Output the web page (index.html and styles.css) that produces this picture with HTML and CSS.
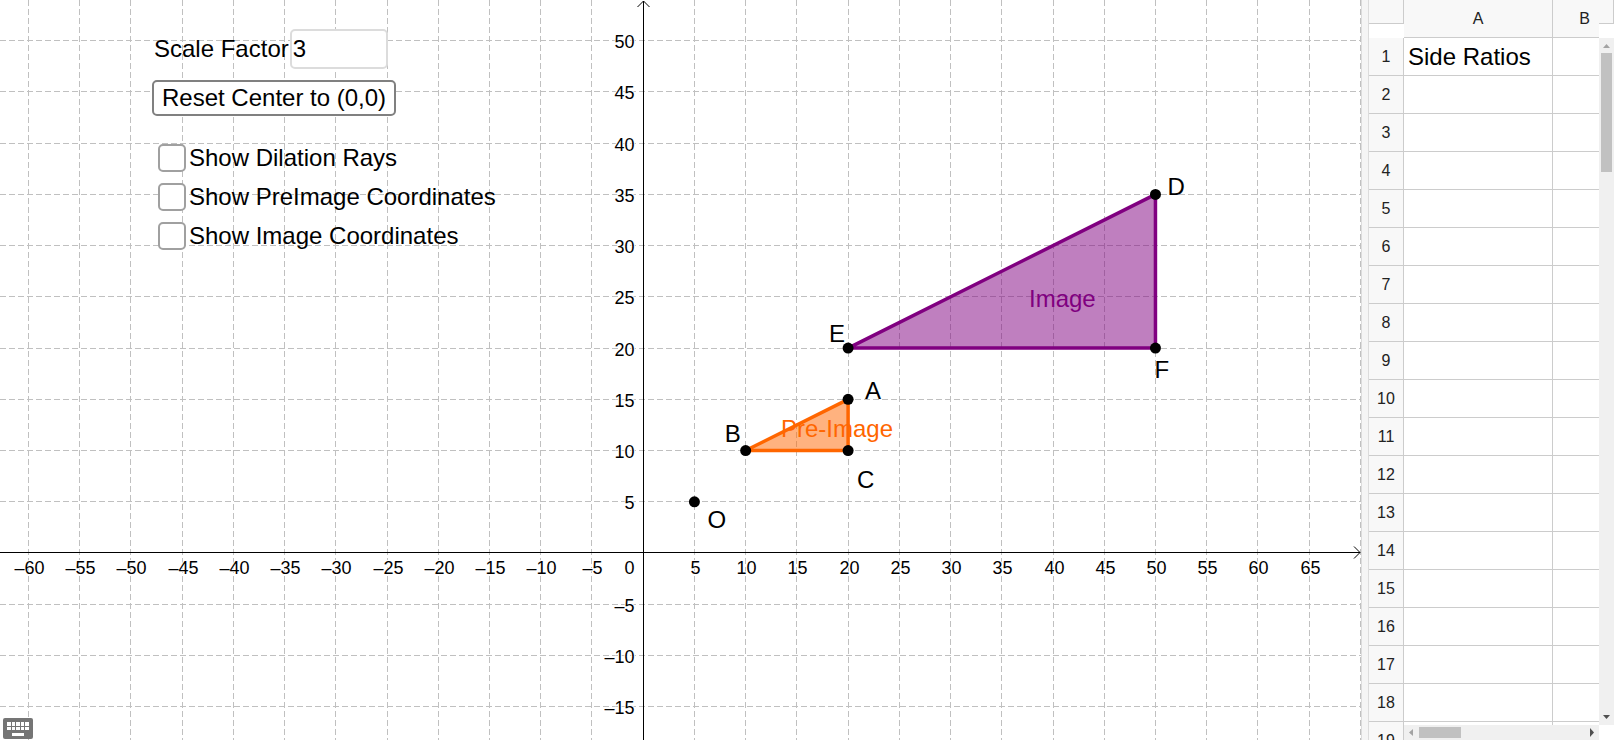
FILE: index.html
```
<!DOCTYPE html>
<html lang="en">
<head>
    <meta charset="UTF-8">
    <meta name="viewport" content="width=device-width, initial-scale=1.0">
    <title>Dilations</title>
    <link rel="stylesheet" href="styles.css">
</head>
<body>
    <main class="app">
        <section class="graphics" id="graphics">
            <svg class="board" id="board"></svg>
            <form class="controls" onsubmit="return false;">
                <div class="scale-row">
                    <label for="scale">Scale Factor</label>
                    <input type="text" id="scale" class="scale-input" value="3">
                </div>
                <button type="button" class="reset-btn">Reset Center to (0,0)</button>
                <div class="checks">
                    <label class="check"><input type="checkbox" id="rays">Show Dilation Rays</label>
                    <label class="check"><input type="checkbox" id="pre-coords">Show PreImage Coordinates</label>
                    <label class="check"><input type="checkbox" id="image-coords">Show Image Coordinates</label>
                </div>
            </form>
            <button type="button" class="keyboard-btn" aria-label="Keyboard">
                <svg width="30" height="21" viewBox="0 0 30 21">
                    <rect width="30" height="21" rx="2" fill="#757575"/>
                    <path fill="#fff" d="M4 4h4v4H4zM9 4h3v4H9zM13 4h4v4h-4zM18 4h3v4h-3zM22 4h4v4h-4zM4 9h4v3H4zM9 9h3v3H9zM13 9h4v3h-4zM18 9h3v3h-3zM22 9h4v3h-4zM9 15h12v3H9z"/>
                </svg>
            </button>
        </section>
        <div class="divider"></div>
        <section class="spreadsheet">
            <div class="sheet-view">
                <table class="sheet">
                    <thead>
                        <tr>
                            <th class="corner"><span></span></th>
                            <th class="col-a">A</th>
                            <th class="col-b">B</th>
                        </tr>
                    </thead>
                    <tbody id="rows"></tbody>
                </table>
                <div class="hbar">
                    <svg width="15" height="15"><path d="M9 4v7L5 7.500z" fill="#a3a3a3"/></svg>
                    <div class="hthumb"></div>
                    <svg class="end" width="15" height="15"><path d="M6 3v9l4-4.500z" fill="#505050"/></svg>
                </div>
            </div>
            <div class="vbar-col">
                <div class="header-end"></div>
                <div class="vbar">
                    <svg width="15" height="15"><path d="M4 10h7L7.500 6z" fill="#a3a3a3"/></svg>
                    <div class="vthumb"></div>
                    <svg class="end" width="15" height="15"><path d="M4 5h7L7.500 9z" fill="#505050"/></svg>
                </div>
            </div>
        </section>
    </main>

    <script>
        const origin = { x: 643.2, y: 553 };
        const unit = 10.245;

        const points = [
            { name: 'A', x: 20, y: 15, dx: 17, dy: 0 },
            { name: 'B', x: 10, y: 10, dx: -21, dy: -9 },
            { name: 'C', x: 20, y: 10, dx: 9, dy: 37 },
            { name: 'D', x: 50, y: 35, dx: 12, dy: 1 },
            { name: 'E', x: 20, y: 20, dx: -19, dy: -6 },
            { name: 'F', x: 50, y: 20, dx: -1, dy: 30 },
            { name: 'O', x: 5, y: 5, dx: 13, dy: 26 }
        ];

        const px = x => origin.x + x * unit;
        const py = y => origin.y - y * unit;
        const snap = v => Math.floor(v) + 0.5;

        function triangle(names, cls) {
            const corners = names.split('').map(n => {
                const p = points.find(q => q.name === n);
                return px(p.x) + ',' + py(p.y);
            });
            return `<polygon class="${cls}" points="${corners.join(' ')}"/>`;
        }

        function drawBoard() {
            const board = document.getElementById('board');
            const w = board.clientWidth;
            const h = board.clientHeight;
            const axisX = 643.5;
            const axisY = 552.5;
            let grid = '';
            let labels = '';

            // vertical lines and x labels
            for (let i = Math.ceil(-origin.x / unit / 5) * 5; px(i) < w; i += 5) {
                const x = snap(px(i));
                if (i !== 0) grid += `<line x1="${x}" y1="0" x2="${x}" y2="${h}"/>`;
                if (i !== 0 && px(i) < w - 20) {
                    labels += `<text class="middle" x="${x + 1}" y="${axisY + 21}">${String(i).replace('-', '–')}</text>`;
                }
            }
            // horizontal lines and y labels
            for (let j = Math.ceil((origin.y - h) / unit / 5) * 5; py(j) > 0; j += 5) {
                const y = snap(py(j));
                if (j !== 0) {
                    grid += `<line x1="0" y1="${y}" x2="${w}" y2="${y}"/>`;
                    labels += `<text class="end" x="${axisX - 9}" y="${y + 7}">${String(j).replace('-', '–')}</text>`;
                }
            }
            labels += `<text class="end" x="${axisX - 9}" y="${axisY + 21}">0</text>`;

            let dots = '';
            points.forEach(p => {
                dots += `<circle cx="${px(p.x)}" cy="${py(p.y)}" r="5.500"/>`;
                dots += `<text x="${px(p.x) + p.dx}" y="${py(p.y) + p.dy}">${p.name}</text>`;
            });

            board.innerHTML = `
                <g class="grid">${grid}</g>
                <g class="axes">
                    <path d="M0 ${axisY}H${w - 1}M${axisX} ${h}V1"/>
                    <path d="M${w - 7} ${axisY - 6}l6 6l-6 6M${axisX - 6} 7l6 -6l6 6"/>
                </g>
                <g class="ticks">${labels}</g>
                ${triangle('DEF', 'image')}
                ${triangle('ABC', 'pre-image')}
                <g class="points">${dots}</g>
                <text class="caption image-text" x="1029" y="307">Image</text>
                <text class="caption pre-text" x="781" y="437">Pre-Image</text>`;
        }

        function fillRows() {
            const rows = document.getElementById('rows');
            for (let r = 1; r <= 19; r++) {
                const tr = document.createElement('tr');
                tr.innerHTML = `<th>${r}</th><td>${r === 1 ? 'Side Ratios' : ''}</td><td></td>`;
                rows.appendChild(tr);
            }
        }

        fillRows();
        drawBoard();
        window.addEventListener('resize', drawBoard);
    </script>
</body>
</html>
```
FILE: styles.css
```
* {
    box-sizing: border-box;
}

body {
    margin: 0;
    background-color: #fff;
    color: #000;
    font-family: "Liberation Sans", Arial, sans-serif;
    overflow: hidden;
}

.app {
    display: flex;
    height: 100vh;
    padding: 0 2px 2px 0;
}

.graphics {
    flex: 1;
    min-width: 0;
    position: relative;
}

.board {
    display: block;
    width: 100%;
    height: 100%;
}

.grid line {
    stroke: #c0c0c0;
    stroke-dasharray: 6 3;
}

.axes path {
    stroke: #000;
    fill: none;
}

.ticks {
    font-size: 18px;
}

.ticks text {
    stroke: #fff;
    stroke-width: 2px;
    paint-order: stroke;
}

.middle {
    text-anchor: middle;
}

.end {
    text-anchor: end;
}

.points,
.caption {
    font-size: 24px;
}

.image,
.pre-image {
    stroke-width: 3.5;
    stroke-linejoin: round;
    fill-opacity: 0.5;
}

.image {
    stroke: #800080;
    fill: #800080;
}

.pre-image {
    stroke: #ff6600;
    fill: #ff6600;
}

.image-text {
    fill: #800080;
}

.pre-text {
    fill: #ff6600;
}

/* Controls floating over the board */
.controls {
    position: absolute;
    top: 29px;
    left: 152px;
    display: flex;
    flex-direction: column;
    align-items: flex-start;
    font-size: 24px;
    line-height: 28px;
}

.scale-row {
    display: flex;
    align-items: center;
    gap: 1px;
    padding-left: 2px;
}

.scale-input {
    width: 98px;
    height: 40px;
    padding: 0 1px;
    border: 2px solid #dcdcdc;
    border-radius: 5px;
    background-color: #fff;
    font: inherit;
}

.reset-btn {
    height: 36px;
    margin-top: 11px;
    padding: 0 8px;
    border: 2px solid #808080;
    border-radius: 5px;
    background-color: #fff;
    color: #000;
    font: inherit;
}

.checks {
    display: flex;
    flex-direction: column;
    gap: 11px;
    margin: 28px 0 0 6px;
}

.check {
    display: flex;
    align-items: center;
    gap: 3px;
}

.check input {
    appearance: none;
    width: 28px;
    height: 28px;
    margin: 0;
    border: 2px solid #a0a0a0;
    border-radius: 5px;
    background-color: #fff;
}

.keyboard-btn {
    position: absolute;
    left: 3px;
    bottom: 1px;
    padding: 0;
    border: none;
    background: none;
}

.keyboard-btn svg {
    display: block;
}

.divider {
    width: 8px;
    background-color: #f5f5f5;
    border: solid #dcdcdc;
    border-width: 0 1px;
}

/* Spreadsheet */
.spreadsheet {
    display: flex;
    width: 245px;
}

.sheet-view {
    position: relative;
    flex: 1;
    min-width: 0;
    overflow: hidden;
}

.sheet {
    width: 100%;
    border-collapse: separate;
    border-spacing: 0;
    table-layout: fixed;
}

.sheet th,
.sheet td {
    height: 38px;
    padding: 0;
    border: solid #cccccc;
    border-width: 0 1px 1px 0;
}

.sheet th {
    background-color: #f8f8f8;
    color: #222;
    font-size: 16px;
    font-weight: normal;
}

.sheet td {
    padding-left: 4px;
    font-size: 24px;
    white-space: nowrap;
}

.sheet .corner {
    width: 35px;
    border: none;
    background-color: #fff;
    vertical-align: top;
}

.corner span {
    display: block;
    height: 24px;
    background-color: #f8f8f8;
    border: solid #cccccc;
    border-width: 0 1px 1px 0;
}

.sheet .col-a {
    width: 149px;
}

.sheet .col-b {
    padding-left: 17px;
}

.sheet tr > :last-child {
    border-right: none;
}

/* Scroll bars */
.hbar {
    position: absolute;
    left: 35px;
    right: 0;
    bottom: 0;
    display: flex;
    align-items: center;
    height: 15px;
    background-color: #f0f0f0;
}

.hthumb {
    width: 42px;
    height: 11px;
    background-color: #c1c1c1;
}

.hbar .end {
    margin-left: auto;
}

.vbar-col {
    display: flex;
    flex-direction: column;
    width: 15px;
    padding-bottom: 15px;
}

.header-end {
    height: 24px;
    margin-bottom: 14px;
    background-color: #f8f8f8;
    border: solid #cccccc;
    border-width: 0 1px 1px 0;
}

.vbar {
    flex: 1;
    display: flex;
    flex-direction: column;
    align-items: center;
    background-color: #f0f0f0;
}

.vthumb {
    width: 11px;
    height: 119px;
    background-color: #c1c1c1;
}

.vbar .end {
    margin-top: auto;
}
```
